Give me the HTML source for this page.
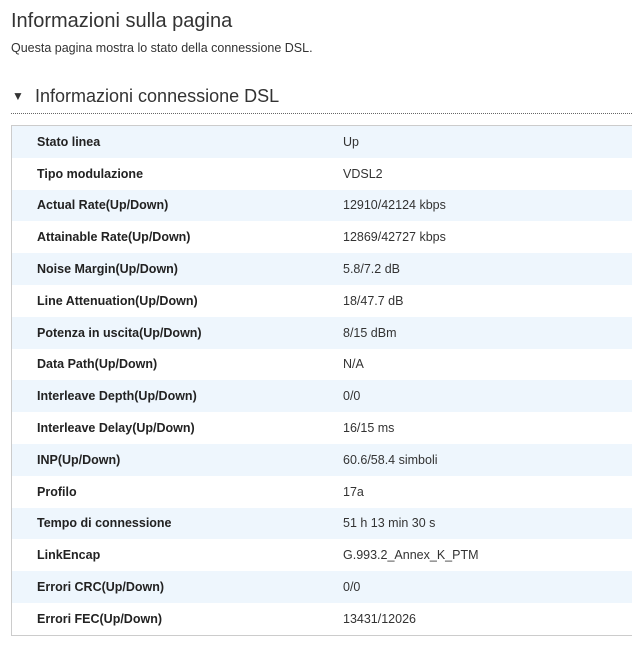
<!DOCTYPE html>
<html><head><meta charset="utf-8"><style>
body{margin:0;width:632px;height:659px;overflow:hidden;background:#fff;font-family:"Liberation Sans",sans-serif;color:#333;}
.t{position:absolute;left:11px;top:10px;font-size:20px;color:#333;}
.s{position:absolute;left:11px;top:41px;font-size:12.5px;color:#333;}
.h{position:absolute;left:12px;top:86px;font-size:18px;color:#333;}
.h span{font-size:12px;display:inline-block;width:23px;vertical-align:2px;}
.d{position:absolute;left:11px;top:113px;width:621px;border-top:1px dotted #666;}
table{position:absolute;left:11px;top:125px;width:630px;border-collapse:collapse;border:1px solid #ccc;font-size:12.5px;}
td{height:31.8px;padding:0;}
td:first-child{padding-left:25px;width:306px;font-weight:bold;color:#222;}
tr:nth-child(odd){background:#eef6fd;}
</style></head><body>
<div class="t">Informazioni sulla pagina</div>
<div class="s">Questa pagina mostra lo stato della connessione DSL.</div>
<div class="h"><span>▼</span>Informazioni connessione DSL</div>
<div class="d"></div>
<table>
<tr><td>Stato linea</td><td>Up</td></tr>
<tr><td>Tipo modulazione</td><td>VDSL2</td></tr>
<tr><td>Actual Rate(Up/Down)</td><td>12910/42124 kbps</td></tr>
<tr><td>Attainable Rate(Up/Down)</td><td>12869/42727 kbps</td></tr>
<tr><td>Noise Margin(Up/Down)</td><td>5.8/7.2 dB</td></tr>
<tr><td>Line Attenuation(Up/Down)</td><td>18/47.7 dB</td></tr>
<tr><td>Potenza in uscita(Up/Down)</td><td>8/15 dBm</td></tr>
<tr><td>Data Path(Up/Down)</td><td>N/A</td></tr>
<tr><td>Interleave Depth(Up/Down)</td><td>0/0</td></tr>
<tr><td>Interleave Delay(Up/Down)</td><td>16/15 ms</td></tr>
<tr><td>INP(Up/Down)</td><td>60.6/58.4 simboli</td></tr>
<tr><td>Profilo</td><td>17a</td></tr>
<tr><td>Tempo di connessione</td><td>51 h 13 min 30 s</td></tr>
<tr><td>LinkEncap</td><td>G.993.2_Annex_K_PTM</td></tr>
<tr><td>Errori CRC(Up/Down)</td><td>0/0</td></tr>
<tr><td>Errori FEC(Up/Down)</td><td>13431/12026</td></tr>
</table>
</body></html>
